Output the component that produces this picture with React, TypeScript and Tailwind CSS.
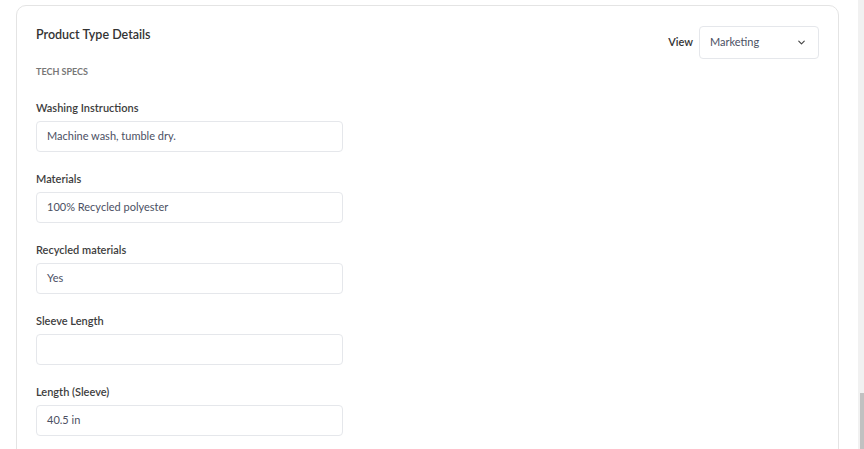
import { ChevronDown } from "lucide-react";

const fields = [
  { label: "Washing Instructions", value: "Machine wash, tumble dry." },
  { label: "Materials", value: "100% Recycled polyester" },
  { label: "Recycled materials", value: "Yes" },
  { label: "Sleeve Length", value: "" },
  { label: "Length (Sleeve)", value: "40.5 in" },
];

export default function App() {
  return (
    <div className="flex h-[449px] overflow-hidden bg-white font-['Lato',sans-serif]">
      <div className="flex-1 pl-4 pr-[19px] pt-[5px]">
        <div className="h-[600px] rounded-[10px] border border-[#e4e4e4] px-[19px] pt-5">
          <div className="flex items-start justify-between">
            <h2 className="text-[12.5px] leading-[18px] font-semibold text-[#333]">Product Type Details</h2>
            <div className="flex items-center gap-[6px]">
              <span className="text-[11px] font-semibold text-[#333]">View</span>
              <div className="flex h-[33px] w-[120px] items-center justify-between rounded border border-[#e5e7eb] pl-[10px] pr-[11px]">
                <span className="text-[11px] text-[#4b5063]">Marketing</span>
                <ChevronDown className="h-[11px] w-[11px] text-[#444]" strokeWidth={2.5} />
              </div>
            </div>
          </div>
          <div className="mt-[7px] text-[9px] leading-3 font-bold uppercase text-[#777]">Tech Specs</div>
          <div className="mt-[22px] flex flex-col gap-[19px]">
            {fields.map((f) => (
              <div key={f.label} className="flex flex-col gap-[5px]">
                <label className="text-[11px] leading-4 font-semibold text-[#3d3d3d]">{f.label}</label>
                <div className="flex h-[31px] w-[307px] items-center rounded border border-[#e5e7eb] px-[10px] text-[11px] text-[#4b5063]">
                  {f.value}
                </div>
              </div>
            ))}
          </div>
        </div>
      </div>
      <div className="flex w-[6px] flex-col bg-[#f1f1f1]">
        <div className="flex-1" />
        <div className="ml-[2px] h-[56px] bg-[#c1c1c1]" />
      </div>
    </div>
  );
}
